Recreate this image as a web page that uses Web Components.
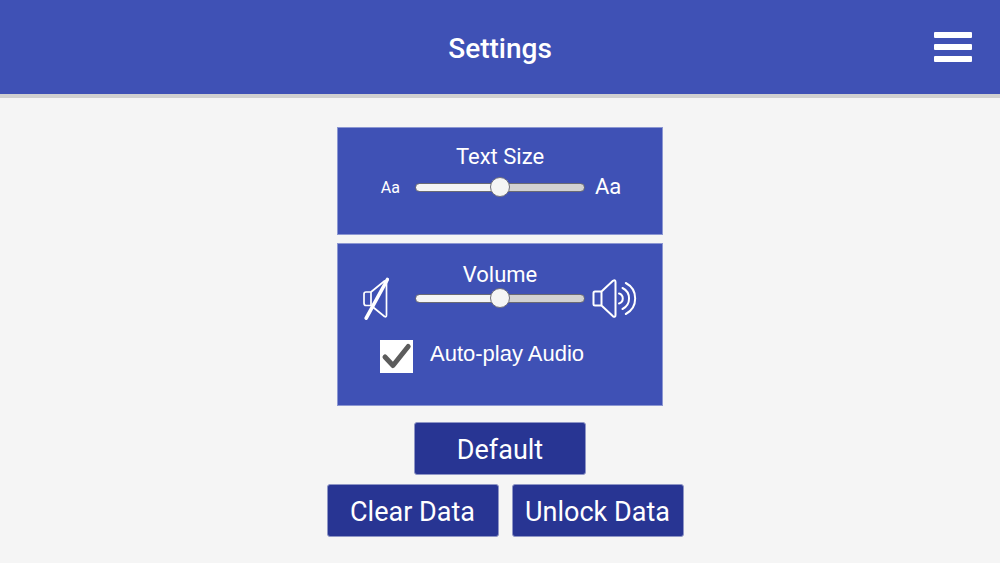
<!DOCTYPE html>
<html lang="en">
<head>
<meta charset="utf-8">
<meta name="viewport" content="width=device-width, initial-scale=1">
<title>Settings</title>
<style>
  html, body { margin: 0; min-height: 100%; background: #f5f5f5; }
  body { font-family: Roboto, "Liberation Sans", sans-serif; color: #fff; }
</style>
</head>
<body>
<settings-page></settings-page>

<script>
  class BaseElement extends HTMLElement {
    constructor() {
      super();
      const t = document.createElement('template');
      t.innerHTML = this.constructor.markup;
      this.attachShadow({ mode: 'open' }).append(t.content.cloneNode(true));
    }
  }

  class AppHeader extends BaseElement {
    static markup = `
      <style>
        :host { display: block; }
        header {
          display: grid; grid-template-columns: 1fr auto 1fr; align-items: center;
          height: 94px; padding: 0 28px; background: #3f51b5;
          border-bottom: 4px solid #d0d0d0;
        }
        h1 { grid-column: 2; margin: 0; font-size: 28px; line-height: 36px; font-weight: 500; padding-top: 4px; }
        button { justify-self: end; border: 0; padding: 0; background: none; color: #fff; display: flex; cursor: pointer; }
      </style>
      <header>
        <h1><slot></slot></h1>
        <button type="button" aria-label="Menu">
          <svg width="38" height="30" viewBox="0 0 38 30" fill="currentColor">
            <rect width="38" height="6" rx="1"/><rect y="12" width="38" height="6" rx="1"/><rect y="24" width="38" height="6" rx="1"/>
          </svg>
        </button>
      </header>`;
  }

  class SettingsPanel extends BaseElement {
    static markup = `
      <style>
        :host { display: block; }
        section { box-sizing: border-box; padding: var(--panel-padding); background: #3f51b5; border: 1px solid #8c97d2; }
        h2 { margin: 0; text-align: center; font-size: 22px; line-height: 28px; font-weight: 400; }
      </style>
      <section><h2><slot name="title"></slot></h2><slot></slot></section>`;
  }

  class RangeControl extends BaseElement {
    static markup = `
      <style>
        :host { display: grid; grid-template: 100% / 1fr 170px 1fr; align-items: center; height: 32px; }
        .low { display: flex; justify-content: flex-end; }
        .high { display: flex; }
        input { appearance: none; -webkit-appearance: none; margin: 0; width: 100%; height: 20px; background: none; }
        input::-webkit-slider-runnable-track {
          box-sizing: border-box; height: 9px; border-radius: 5px; border: 1px solid #6b6b74;
          background: linear-gradient(90deg, #f5f5f5 50%, #d2d2d2 50%);
        }
        input::-webkit-slider-thumb {
          -webkit-appearance: none; box-sizing: border-box; width: 20px; height: 20px; margin-top: -7px;
          border-radius: 50%; background: #f5f5f5; border: 1px solid #70707a;
        }
      </style>
      <div class="low"><slot name="low"></slot></div>
      <input type="range" min="0" max="100" value="50">
      <div class="high"><slot name="high"></slot></div>`;
    connectedCallback() {
      this.shadowRoot.querySelector('input').setAttribute('aria-label', this.getAttribute('label'));
    }
  }

  class CheckControl extends BaseElement {
    static markup = `
      <style>
        :host { display: block; }
        label { display: flex; align-items: flex-start; gap: 17px; font: 22px/28px "Liberation Sans", Arial, sans-serif; }
        .box { display: grid; width: 33px; height: 33px; }
        input, svg { grid-area: 1 / 1; }
        input { appearance: none; -webkit-appearance: none; margin: 0; background: #fff; }
        svg { pointer-events: none; visibility: hidden; }
        input:checked + svg { visibility: visible; }
      </style>
      <label>
        <span class="box">
          <input type="checkbox" checked>
          <svg width="33" height="33" viewBox="0 0 33 33" fill="none" stroke="#5c5c5c" stroke-width="5" stroke-linecap="round" stroke-linejoin="round"><path d="M5 17 L13 25.500 L28.200 6.500"/></svg>
        </span>
        <slot></slot>
      </label>`;
  }

  class ActionButton extends BaseElement {
    static markup = `
      <style>
        :host { display: block; width: 172px; }
        button {
          box-sizing: border-box; display: block; width: 100%; height: 53px; padding: 3px 0 0; white-space: nowrap;
          font: 400 27px/36px Roboto, "Liberation Sans", sans-serif; color: #fff; background: #283593;
          border: 1px solid #8f96c6; border-radius: 3px; cursor: pointer;
        }
      </style>
      <button type="button"><slot></slot></button>`;
  }

  class SpeakerIcon extends BaseElement {
    static markup = `
      <style>
        :host { display: block; }
        svg { display: none; fill: none; stroke: #fff; stroke-width: 2; stroke-linejoin: round; stroke-linecap: round; }
        :host([muted]) .muted, :host(:not([muted])) .loud { display: block; }
      </style>
      <svg class="muted" width="26" height="44" viewBox="0 0 26 44">
        <path d="M8 16 H3 Q1 16 1 18 V27 Q1 29.500 3 29.500 H8 Z M8 16 L21.500 5 Q23.500 4 23.500 6 V39 Q23.500 41.500 21.500 40.500 L8 29.500" stroke-width="1.700"/>
        <path d="M3.200 42.200 L24.400 3.500" stroke-width="3.600"/>
      </svg>
      <svg class="loud" width="46" height="42" viewBox="0 -2 46 42" stroke-width="1.800">
        <path d="M9.500 12.500 H3 Q1.500 12.500 1.500 14 V25 Q1.500 26.500 3 26.500 H9.500 Z M9.500 12.500 L21 1.800 Q23.500 0.300 23.500 3 V36 Q23.500 38.800 21 37.300 L9.500 26.500"/>
        <path d="M27 14.500 A5.200 5.200 0 0 1 27 24.500 M30.500 9 A11.700 11.700 0 0 1 30.500 30 M33.800 4 A17.500 17.500 0 0 1 33.800 35"/>
      </svg>`;
  }

  class SettingsPage extends BaseElement {
    static markup = `
      <style>
        :host { display: block; }
        main { display: flex; flex-direction: column; align-items: center; padding: 29px 16px 16px; }
        .panels { display: grid; gap: 8px; width: 100%; max-width: 326px; }
        .text { --panel-padding: 15px 0 31px; }
        .sound { --panel-padding: 17px 0 32px; }
        .sound range-control { height: 18px; }
        .small { font-size: 16px; line-height: 20px; margin: 2px 15px 0 0; }
        .large { font-size: 22px; line-height: 28px; margin-left: 10px; }
        [muted] { margin-right: 26px; }
        speaker-icon:not([muted]) { margin-left: 7px; }
        check-control { margin: 33px 0 0 42px; }
        .actions { display: grid; justify-items: center; gap: 9px; margin-top: 16px; }
        .data { display: flex; flex-wrap: wrap; justify-content: center; gap: 9px 13px; padding-left: 10px; }
      </style>
      <app-header>Settings</app-header>
      <main>
        <div class="panels">
          <settings-panel class="text">
            <span slot="title">Text Size</span>
            <range-control label="Text Size">
              <span class="small" slot="low">Aa</span>
              <span class="large" slot="high">Aa</span>
            </range-control>
          </settings-panel>
          <settings-panel class="sound">
            <span slot="title">Volume</span>
            <range-control label="Volume">
              <speaker-icon muted slot="low"></speaker-icon>
              <speaker-icon slot="high"></speaker-icon>
            </range-control>
            <check-control>Auto-play Audio</check-control>
          </settings-panel>
        </div>
        <div class="actions">
          <action-button>Default</action-button>
          <div class="data">
            <action-button>Clear Data</action-button>
            <action-button>Unlock Data</action-button>
          </div>
        </div>
      </main>`;
  }

  customElements.define('app-header', AppHeader);
  customElements.define('settings-panel', SettingsPanel);
  customElements.define('range-control', RangeControl);
  customElements.define('check-control', CheckControl);
  customElements.define('action-button', ActionButton);
  customElements.define('speaker-icon', SpeakerIcon);
  customElements.define('settings-page', SettingsPage);
</script>
</body>
</html>
